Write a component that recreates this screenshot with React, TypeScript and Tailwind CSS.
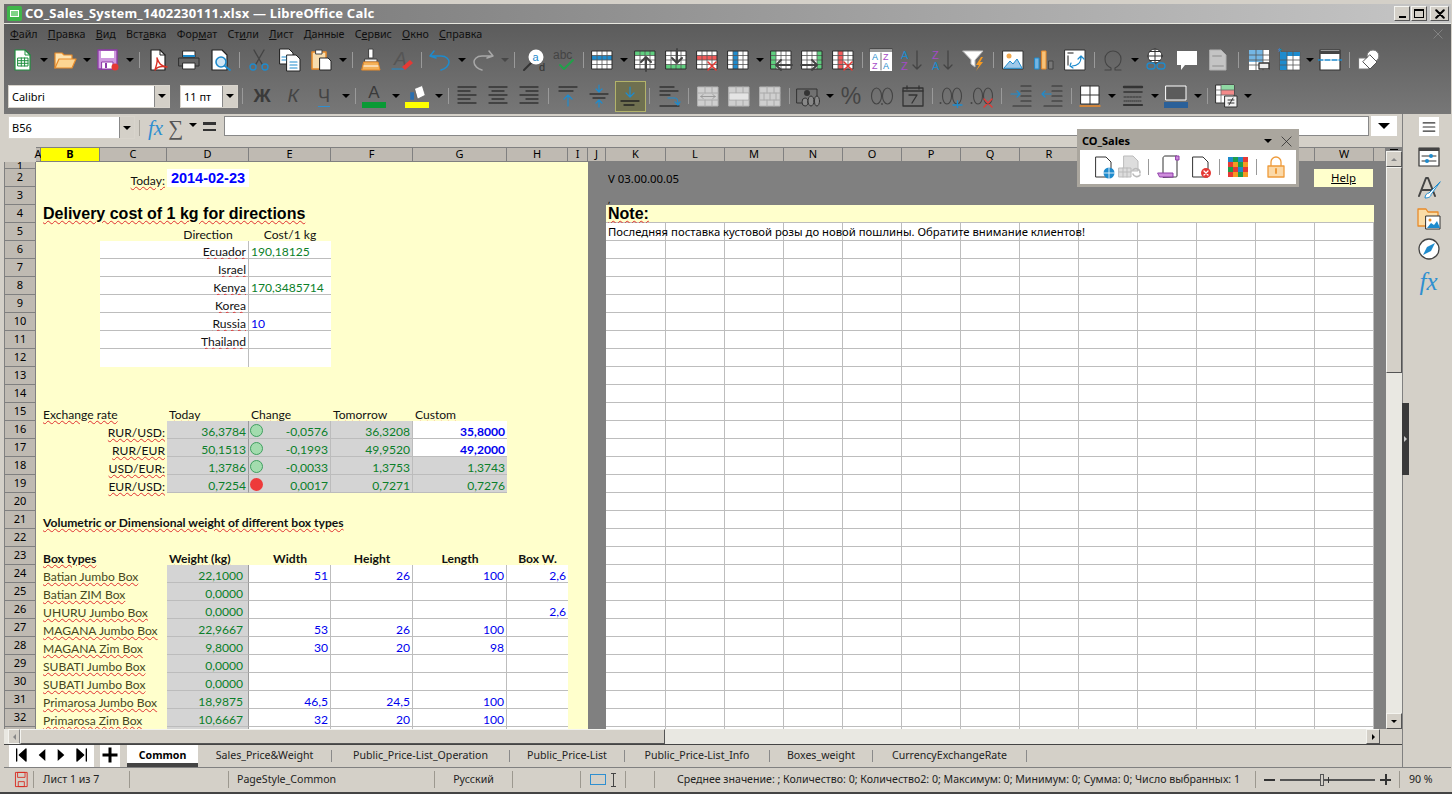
import type { ReactNode } from 'react'

const ui = "font-['Noto_Sans','Liberation_Sans',sans-serif]"
const sheet = "font-['Lato','Open_Sans',sans-serif]"
const arial = "font-['Liberation_Sans',Arial,sans-serif]"
const serif = "font-['Liberation_Serif',serif]"

const ink = '#2e2e2e'
const blue = '#1e8bcd'

function Sv({ children, s = 24 }: { children: ReactNode; s?: number }) {
  return (
    <svg width={s} height={s} viewBox="0 0 24 24" fill="none" strokeLinecap="round" strokeLinejoin="round">
      {children}
    </svg>
  )
}

function Caret({ big }: { big?: boolean }) {
  return big ? (
    <span className="h-0 w-0 border-x-[6px] border-t-[6px] border-x-transparent border-t-black" />
  ) : (
    <span className="h-0 w-0 border-x-[4px] border-t-[4px] border-x-transparent border-t-black" />
  )
}

function Btn({ children }: { children: ReactNode }) {
  return <div className="flex h-full w-[31px] shrink-0 items-center justify-center">{children}</div>
}

function Drop({ children, dim }: { children: ReactNode; dim?: boolean }) {
  return (
    <div className="flex h-full w-[43px] shrink-0 items-center">
      <div className="flex w-[31px] items-center justify-center">{children}</div>
      <div className={dim ? 'flex w-[12px] justify-center opacity-30' : 'flex w-[12px] justify-center'}>
        <Caret />
      </div>
    </div>
  )
}

function Sep({ w = 'w-[7px]' }: { w?: string }) {
  return (
    <div className={`flex h-full shrink-0 items-center justify-center ${w}`}>
      <span className="h-[16px] w-px bg-[#9a9a9a]" />
    </div>
  )
}

/* table icon used by the row / column buttons */
function GridIcon({
  fill,
  rect,
  over,
}: {
  fill?: string
  rect?: [number, number, number, number]
  over?: ReactNode
}) {
  return (
    <Sv>
      <rect x="2" y="3" width="20" height="18" fill="#fff" />
      {rect && fill && <rect x={rect[0]} y={rect[1]} width={rect[2]} height={rect[3]} fill={fill} />}
      <path d="M7 3v18M12 3v18M17 3v18M2 7.5h20M2 12h20M2 16.5h20" stroke="#555" strokeWidth=".8" />
      <rect x="2" y="3" width="20" height="18" stroke={ink} strokeWidth="1" />
      {over}
    </Sv>
  )
}

const arrowUp = <path d="M13 23V9M8 14l5-5 5 5" stroke="#444" strokeWidth="2" />
const arrowDown = <path d="M13 1v14M8 10l5 5 5-5" stroke="#444" strokeWidth="2" />
const arrowLeft = <path d="M23 17H7M12 12l-5 5 5 5" stroke="#444" strokeWidth="2" />
const arrowRight = <path d="M1 17h16M12 12l5 5-5 5" stroke="#444" strokeWidth="2" />
const redX = <path d="M13 14l8 8M21 14l-8 8" stroke="#e53935" strokeWidth="1.6" />

function Lines({ rows }: { rows: [number, number][] }) {
  return (
    <Sv>
      {rows.map(([x, w], i) => (
        <path key={i} d={`M${x} ${3 + i * 4}h${w}`} stroke="#333" strokeWidth="1.3" />
      ))}
    </Sv>
  )
}

function Toolbar1() {
  return (
    <div className="flex h-[34px] pb-[3px] pl-[2.5px]">
      <Drop>
        <Sv>
          <path d="M5 2h10l5 5v15H5z" fill="#fff" stroke="#1f8f3f" strokeWidth="1.2" />
          <path d="M15 2v5h5" stroke="#1f8f3f" />
          <path d="M8 10h10v8H8zM8 12.7h10M8 15.3h10M11.3 10v8M14.6 10v8" stroke="#1f8f3f" strokeWidth="1" />
        </Sv>
      </Drop>
      <Drop>
        <Sv>
          <path d="M2 20V5h7l2 2h8v4" fill="#fde3b0" stroke="#e88b2a" strokeWidth="1.2" />
          <path d="M2 20l4-9h17l-4 9z" fill="#fcd592" stroke="#e88b2a" strokeWidth="1.2" />
        </Sv>
      </Drop>
      <Drop>
        <Sv>
          <path d="M2 2h19v19H2z" fill="#cf9ae0" stroke="#8e3aa8" strokeWidth="1.3" />
          <path d="M5 3h13v7H5z" fill="#fff" />
          <path d="M6 14h11v7H6z" fill="#fff" stroke="#8e3aa8" />
          <path d="M9 15h2v5H9z" fill="#8e3aa8" />
          <circle cx="19" cy="19" r="3.5" fill="#e53935" />
        </Sv>
      </Drop>
      <Sep />
      <Btn>
        <Sv>
          <path d="M5 2h9l5 5v15H5z" fill="#fff" stroke="#222" strokeWidth="1.2" />
          <path d="M14 2v5h5" stroke="#222" />
          <path d="M11 10c2 6 4 8 10 9-5-1-10 0-12 3 1-4 3-8 2-12z" stroke="#d93025" strokeWidth="1.4" />
        </Sv>
      </Btn>
      <Btn>
        <Sv>
          <path d="M6 3h12v6H6z" fill="#fff" stroke={ink} />
          <path d="M6 7h12v2H6z" fill={blue} />
          <path d="M2 10h20v8H2z" fill="#666" stroke={ink} />
          <path d="M6 15h12v6H6z" fill="#fff" stroke={ink} />
        </Sv>
      </Btn>
      <Btn>
        <Sv>
          <path d="M4 2h10l5 5v15H4z" fill="#fff" stroke="#222" strokeWidth="1.2" />
          <circle cx="13" cy="14" r="5" fill="#cfe6f5" stroke={blue} strokeWidth="1.6" />
          <path d="M17 18l5 4" stroke={blue} strokeWidth="2" />
        </Sv>
      </Btn>
      <Sep w="w-[8px]" />
      <Btn>
        <Sv>
          <path d="M7 2l8 14M17 2L9 16" stroke="#444" strokeWidth="1.4" />
          <circle cx="6" cy="19" r="3" stroke={blue} strokeWidth="1.4" />
          <circle cx="18" cy="19" r="3" stroke={blue} strokeWidth="1.4" />
        </Sv>
      </Btn>
      <Btn>
        <Sv>
          <path d="M2 1h9l4 4v11H2z" fill="#fff" stroke="#222" />
          <path d="M9 7h9l4 4v12H9z" fill="#fff" stroke="#222" />
          <path d="M4 9h4M4 12h4M12 14h7M12 17h7M12 20h7" stroke={blue} strokeWidth="1.2" />
        </Sv>
      </Btn>
      <Drop>
        <Sv>
          <path d="M3 4h14v17H3z" fill="#f7dcae" stroke="#e88b2a" strokeWidth="1.5" />
          <path d="M7 2h6v4H7z" fill="#fff" stroke="#444" />
          <path d="M11 10h8l3 3v9H11z" fill="#fff" stroke="#222" />
        </Sv>
      </Drop>
      <Sep />
      <Btn>
        <Sv>
          <path d="M10 1h4v9h-4z" fill="#fff" stroke="#444" />
          <path d="M6 11h12v3H6z" fill="#eee" stroke="#444" />
          <path d="M5 14h14l2 8H3z" fill="#f4b25a" stroke="#e88b2a" />
          <path d="M5 18h14" stroke="#fff" />
        </Sv>
      </Btn>
      <Btn>
        <Sv>
          <text x="4" y="17" fontSize="19" fontStyle="italic" fill="#555" className={arial}>A</text>
          <path d="M2 21h12" stroke={blue} />
          <path d="M12 19l8-7 3 3-8 7z" fill="#e53935" />
        </Sv>
      </Btn>
      <Sep />
      <Drop>
        <Sv>
          <path d="M6 3L2 8l6 2M3 8h10c6 0 8 4 8 6 0 4-4 7-8 8" stroke={blue} strokeWidth="1.5" />
        </Sv>
      </Drop>
      <Drop dim>
        <Sv>
          <path d="M18 3l4 5-6 2M21 8H11C5 8 3 12 3 14c0 4 4 7 8 8" stroke="#a8a8a8" strokeWidth="1.5" />
        </Sv>
      </Drop>
      <Sep w="w-[8px]" />
      <Btn>
        <Sv>
          <path d="M2 22l7-7" stroke="#333" strokeWidth="2" />
          <circle cx="14" cy="9" r="7.5" fill="#fff" />
          <text x="10.5" y="13" fontSize="11" fill={blue} className={arial}>a</text>
          <text x="17" y="23" fontSize="11" fill="#333" className={arial}>d</text>
        </Sv>
      </Btn>
      <Btn>
        <Sv>
          <text x="0" y="11" fontSize="12" fill="#444" className={arial}>abc</text>
          <path d="M7 17l4 4 9-9" stroke="#21a04a" strokeWidth="2" />
        </Sv>
      </Btn>
      <Sep w="w-[6px]" />
      <Drop>
        <GridIcon fill={blue} rect={[2, 7.5, 20, 4.5]} />
      </Drop>
      <Btn>
        <GridIcon fill="#5fcf7f" rect={[2, 3, 20, 4.5]} over={arrowUp} />
      </Btn>
      <Btn>
        <GridIcon fill="#5fcf7f" rect={[2, 16.5, 20, 4.5]} over={arrowDown} />
      </Btn>
      <Btn>
        <GridIcon fill="#f35a5a" rect={[2, 7.5, 20, 4.5]} over={redX} />
      </Btn>
      <Drop>
        <GridIcon fill={blue} rect={[7, 3, 5, 18]} />
      </Drop>
      <Btn>
        <GridIcon fill="#5fcf7f" rect={[2, 3, 5, 18]} over={arrowLeft} />
      </Btn>
      <Btn>
        <GridIcon fill="#5fcf7f" rect={[17, 3, 5, 18]} over={arrowRight} />
      </Btn>
      <Btn>
        <GridIcon fill="#f35a5a" rect={[7, 3, 5, 18]} over={redX} />
      </Btn>
      <Sep />
      <Btn>
        <Sv>
          <path d="M1 1h22v22H1z" fill="#fff" />
          <path d="M1 1h22M1 3h22" stroke="#333" strokeWidth="1" />
          <text x="3" y="12" fontSize="9" fill={blue} className={arial}>A</text>
          <text x="3" y="21" fontSize="9" fill="#a64ac9" className={arial}>Z</text>
          <text x="14" y="12" fontSize="9" fill="#a64ac9" className={arial}>Z</text>
          <text x="14" y="21" fontSize="9" fill={blue} className={arial}>A</text>
          <path d="M12 5v17" stroke="#333" strokeWidth=".7" />
        </Sv>
      </Btn>
      <Btn>
        <Sv>
          <text x="1" y="11" fontSize="11" fill={blue} className={arial}>A</text>
          <text x="1" y="22" fontSize="11" fill="#a64ac9" className={arial}>Z</text>
          <path d="M17 3v18M13 17l4 4 4-4" stroke="#444" strokeWidth="1.3" />
        </Sv>
      </Btn>
      <Btn>
        <Sv>
          <text x="1" y="11" fontSize="11" fill="#a64ac9" className={arial}>Z</text>
          <text x="1" y="22" fontSize="11" fill={blue} className={arial}>A</text>
          <path d="M17 3v18M13 17l4 4 4-4" stroke="#444" strokeWidth="1.3" />
        </Sv>
      </Btn>
      <Btn>
        <Sv>
          <path d="M1 3h20l-8 9v7l-4-3v-4z" fill="#fff" stroke="#bbb" />
          <path d="M19 9l-5 8h3l-3 6 7-9h-3l3-5z" fill="#f59a23" />
        </Sv>
      </Btn>
      <Sep w="w-[8px]" />
      <Btn>
        <Sv>
          <path d="M2 3h20v18H2z" fill="#fff" stroke="#333" />
          <circle cx="8" cy="8" r="2.5" fill="#f2a94e" />
          <path d="M3 20l6-7 3 3 4-5 5 9z" fill="#9fc9ea" stroke={blue} />
        </Sv>
      </Btn>
      <Btn>
        <Sv>
          <path d="M3 10h4v11H3z" fill="#74b6e4" stroke={blue} />
          <path d="M10 3h4v18h-4z" fill="#f6c27a" stroke="#e88b2a" />
          <path d="M17 13h4v8h-4z" fill="#777" stroke="#444" />
        </Sv>
      </Btn>
      <Btn>
        <Sv>
          <path d="M2 2h20v20H2z" fill="#fff" stroke="#333" />
          <path d="M5 5h5M5 8v9" stroke="#666" strokeWidth="1.5" />
          <path d="M9 18c5 0 9-3 9-9M15 11l3-3 3 3M8 15l-1 3 3 2" stroke={blue} strokeWidth="1.2" />
        </Sv>
      </Btn>
      <Sep />
      <Drop>
        <Sv>
          <path d="M4 22h6v-2c-4-2-6-5-6-9 0-5 4-8 8-8s8 3 8 8c0 4-2 7-6 9v2h6" stroke="#444" strokeWidth="1.1" />
        </Sv>
      </Drop>
      <Btn>
        <Sv>
          <circle cx="11" cy="8" r="7" fill="#fff" stroke="#333" />
          <path d="M4 8h14M11 1v14M6 3.5h10M6 12.5h10" stroke="#333" strokeWidth="1" />
          <rect x="3" y="15" width="8" height="6" rx="3" stroke={blue} strokeWidth="1.3" />
          <rect x="13" y="15" width="8" height="6" rx="3" stroke={blue} strokeWidth="1.3" />
        </Sv>
      </Btn>
      <Btn>
        <Sv>
          <path d="M2 3h20v14H10l-4 5v-5H2z" fill="#fff" />
        </Sv>
      </Btn>
      <Btn>
        <Sv>
          <path d="M4 2h11l5 5v15H4z" fill="#c4c4c4" stroke="#b0b0b0" />
          <path d="M7 8h8M7 18h10" stroke="#a8a8a8" strokeWidth="2" />
        </Sv>
      </Btn>
      <Sep w="w-[10px]" />
      <Btn>
        <Sv>
          <path d="M2 2h20v20H2z" fill="#fff" />
          <path d="M2 2h14v12H2z" fill="#74b6e4" />
          <path d="M2 7h20M2 12h20M2 17h20M9 2v20M16 2v20" stroke="#555" strokeWidth=".8" />
          <path d="M12 15h10v6H12z" fill="#eee" stroke="#333" strokeWidth="1.3" />
        </Sv>
      </Btn>
      <div className="flex h-full w-[40px] shrink-0 items-center">
        <div className="flex w-[31px] justify-center">
          <Sv>
            <path d="M2 4h20v18H2z" fill="#fff" stroke="#555" strokeWidth=".8" />
            <path d="M2 4h20v4H2zM2 4h7v18H2z" fill={blue} />
            <path d="M2 12h20M2 17h20M9 4v18M15 4v18" stroke="#555" strokeWidth=".8" />
            <text x="0" y="8" fontSize="10" fill={blue} className={arial}>*</text>
          </Sv>
        </div>
        <Caret />
      </div>
      <Btn>
        <Sv>
          <path d="M2 2h20v20H2z" fill="#fff" stroke="#333" strokeWidth="1.2" />
          <path d="M2 3h20v3H2z" fill="#444" />
          <path d="M0 12h24" stroke={blue} strokeWidth="1.4" strokeDasharray="5 2" />
        </Sv>
      </Btn>
      <Sep w="w-[8px]" />
      <Btn>
        <Sv>
          <circle cx="16" cy="8" r="6" fill="#fff" stroke="#777" />
          <path d="M2 10h10v11H2z" fill="#fff" stroke="#777" />
          <path d="M13 7l7 7-7 7-7-7z" fill="#fff" stroke="#555" />
        </Sv>
      </Btn>
    </div>
  )
}

function Combo({ w, label }: { w: string; label: string }) {
  return (
    <div className={`flex h-[23px] shrink-0 border border-[#d8d4cc] bg-white ${w} ${ui}`}>
      <span className="flex-1 truncate pl-[3px] text-[11px] leading-[21px] text-black">{label}</span>
      <span className="flex w-[15px] items-center justify-center border-l border-[#888] bg-[#d4d0c8]">
        <Caret />
      </span>
    </div>
  )
}

function MergeIcon({ children }: { children?: ReactNode }) {
  return (
    <Sv>
      <path d="M2 3h20v19H2z" fill="#cfcfcf" stroke="#b5b5b5" />
      <path d="M2 9h20M2 16h20M9 3v6M16 3v6M9 16v6M16 16v6" stroke="#aaa" />
      {children}
    </Sv>
  )
}

function Toolbar2() {
  return (
    <div className="flex h-[36px] items-center pl-[4px]">
      <Combo w="w-[162px]" label="Calibri" />
      <div className="w-[10px] shrink-0" />
      <Combo w="w-[58px]" label="11 пт" />
      <Sep w="w-[8.5px]" />
      <Btn>
        <span className={`text-[19px] font-bold text-[#3a3a3a] ${arial}`}>Ж</span>
      </Btn>
      <Btn>
        <span className={`text-[19px] italic text-[#444] ${arial}`}>К</span>
      </Btn>
      <Drop>
        <span className={`border-b border-[#2f8fd0] text-[18px] leading-[20px] text-[#444] ${arial}`}>Ч</span>
      </Drop>
      <Sep />
      <Drop>
        <div className="flex flex-col items-center">
          <span className={`text-[17px] leading-[17px] text-[#3a3a3a] ${arial}`}>A</span>
          <span className="mt-[1px] h-[6px] w-[24px] bg-[#0a9a35]" />
        </div>
      </Drop>
      <Drop>
        <div className="flex flex-col items-center">
          <Sv s={18}>
            <path d="M3 21V11h5v10z" fill="#2a6fb0" />
            <path d="M9 6l10-4 4 13-10 5z" fill="#fff" stroke="#666" />
          </Sv>
          <span className="h-[6px] w-[24px] bg-[#ffff00]" />
        </div>
      </Drop>
      <Sep />
      <Btn>
        <Lines rows={[[3, 18], [3, 12], [3, 18], [3, 12], [3, 18]]} />
      </Btn>
      <Btn>
        <Lines rows={[[3, 18], [6, 12], [3, 18], [6, 12], [3, 18]]} />
      </Btn>
      <Btn>
        <Lines rows={[[3, 18], [9, 12], [3, 18], [9, 12], [3, 18]]} />
      </Btn>
      <Sep w="w-[8px]" />
      <Btn>
        <Sv>
          <path d="M3 3h18M3 7h14" stroke="#333" strokeWidth="1.3" />
          <path d="M12 22V12M8 15l4-4 4 4" stroke={blue} strokeWidth="1.2" />
        </Sv>
      </Btn>
      <Btn>
        <Sv>
          <path d="M3 10h18M6 14h12" stroke="#333" strokeWidth="1.3" />
          <path d="M12 1v7M9 5l3 3 3-3M12 23v-7M9 19l3-3 3 3" stroke={blue} strokeWidth="1.2" />
        </Sv>
      </Btn>
      <div className="flex h-[31px] w-[31px] shrink-0 items-center justify-center border border-[#b3b36a] bg-[#6f7050]">
        <Sv>
          <path d="M3 17h18M6 21h10" stroke="#222" strokeWidth="1.3" />
          <path d="M12 3v9M8 9l4 4 4-4" stroke={blue} strokeWidth="1.2" />
        </Sv>
      </div>
      <Sep w="w-[8px]" />
      <Btn>
        <Sv>
          <path d="M3 3h14M3 7h18M3 11h10M3 22h19" stroke="#333" strokeWidth="1.3" />
          <path d="M11 14h7c3 0 3 3 3 6M18 18l3 3 2-3" stroke={blue} strokeWidth="1.2" />
        </Sv>
      </Btn>
      <Sep w="w-[8px]" />
      <Btn>
        <MergeIcon>
          <path d="M5 12.5h14M5 12.5l2-2M5 12.5l2 2M19 12.5l-2-2M19 12.5l-2 2" stroke="#9a9a9a" />
        </MergeIcon>
      </Btn>
      <Btn>
        <MergeIcon>
          <path d="M3 9.5h18v6H3z" fill="#e4e4e4" stroke="none" />
        </MergeIcon>
      </Btn>
      <Btn>
        <MergeIcon>
          <path d="M6 9v7M12 9v7M18 9v7" stroke="#aaa" />
        </MergeIcon>
      </Btn>
      <Sep />
      <Drop>
        <Sv>
          <path d="M1 5h20v14H1z" stroke="#333" />
          <circle cx="11" cy="9" r="3" fill="#333" />
          <ellipse cx="9" cy="18" rx="3" ry="4" fill="#888" stroke="#333" />
          <ellipse cx="15" cy="17" rx="3" ry="5" fill="#888" stroke="#333" />
          <ellipse cx="21" cy="17" rx="2.5" ry="5" fill="#888" stroke="#333" />
        </Sv>
      </Drop>
      <Btn>
        <span className={`text-[23px] leading-none text-[#444] ${arial}`}>%</span>
      </Btn>
      <Btn>
        <Sv>
          <ellipse cx="6.5" cy="12" rx="5" ry="8" stroke="#444" strokeWidth="1.1" />
          <ellipse cx="17.5" cy="12" rx="5" ry="8" stroke="#444" strokeWidth="1.1" />
          <circle cx="12" cy="20" r=".9" fill="#444" />
        </Sv>
      </Btn>
      <Btn>
        <Sv>
          <path d="M2 4h20v18H2z" stroke="#333" strokeWidth="1.3" />
          <path d="M2 7h20M6 2v3M18 2v3" stroke="#333" strokeWidth="1.3" />
          <path d="M8 11h8l-5 8" stroke="#333" strokeWidth="1.3" />
        </Sv>
      </Btn>
      <Sep />
      <Btn>
        <Sv>
          <circle cx="1.5" cy="19" r="1" fill="#444" />
          <ellipse cx="8" cy="12" rx="4.5" ry="8" stroke="#444" strokeWidth="1.1" />
          <ellipse cx="18" cy="12" rx="4.5" ry="8" stroke="#444" strokeWidth="1.1" />
          <path d="M14 21h9M18.5 17v8" stroke={blue} strokeWidth="1.3" />
        </Sv>
      </Btn>
      <Btn>
        <Sv>
          <circle cx="1.5" cy="19" r="1" fill="#444" />
          <ellipse cx="8" cy="12" rx="4.5" ry="8" stroke="#444" strokeWidth="1.1" />
          <ellipse cx="18" cy="12" rx="4.5" ry="8" stroke="#444" strokeWidth="1.1" />
          <path d="M14 15l8 8M22 15l-8 8" stroke="#e53935" strokeWidth="1.4" />
        </Sv>
      </Btn>
      <Sep w="w-[8px]" />
      <Btn>
        <Sv>
          <path d="M12 2h10M12 7h10M12 12h10M12 17h10M4 22h18" stroke="#333" strokeWidth="1.2" />
          <path d="M2 10h9M8 7l3 3-3 3" stroke={blue} strokeWidth="1.2" />
        </Sv>
      </Btn>
      <Btn>
        <Sv>
          <path d="M12 2h10M12 7h10M12 12h10M12 17h10M4 22h18" stroke="#333" strokeWidth="1.2" />
          <path d="M11 10H2M5 7l-3 3 3 3" stroke={blue} strokeWidth="1.2" />
        </Sv>
      </Btn>
      <Sep />
      <Drop>
        <Sv>
          <path d="M3 2h18v18H3z" fill="#fff" stroke="#333" />
          <path d="M12 2v18M3 11h18" stroke="#333" />
          <path d="M2 22h20" stroke="#ee8a2a" strokeWidth="1.4" />
        </Sv>
      </Drop>
      <Drop>
        <Sv>
          <path d="M3 3h18" stroke="#333" strokeWidth="2.4" />
          <path d="M3 8h18" stroke="#333" strokeWidth="1.6" />
          <path d="M3 13h18" stroke="#333" strokeDasharray="2 1" />
          <path d="M3 17h18" stroke="#333" strokeDasharray="1 1" />
          <path d="M3 21h18" stroke="#333" strokeWidth="2.2" />
        </Sv>
      </Drop>
      <Drop>
        <Sv>
          <path d="M2 2h20v14H2z" fill="#5c5c5c" stroke="#fff" strokeWidth="1" />
          <path d="M0 18h24v6H0z" fill="#2a6099" />
        </Sv>
      </Drop>
      <Sep />
      <Drop>
        <Sv>
          <path d="M2 1h18v18H2z" fill="#fff" stroke="#333" />
          <path d="M7 1h13v5H7z" fill="#8fd9a3" />
          <path d="M7 6h13v5H7z" fill="#f38a8a" />
          <path d="M2 6h18M2 11h18M7 1v18" stroke="#666" strokeWidth=".8" />
          <path d="M11 12h12v11H11z" fill="#f2f2f2" stroke="#333" />
          <path d="M14 16h6M14 19h6M19 14l-4 7" stroke="#333" />
        </Sv>
      </Drop>
    </div>
  )
}

const menus: [string, string, string][] = [
  ['', 'Ф', 'айл'],
  ['', 'П', 'равка'],
  ['', 'В', 'ид'],
  ['Вст', 'а', 'вка'],
  ['Фор', 'м', 'ат'],
  ['Ст', 'и', 'ли'],
  ['', 'Л', 'ист'],
  ['', 'Д', 'анные'],
  ['С', 'е', 'рвис'],
  ['', 'О', 'кно'],
  ['', 'С', 'правка'],
]

function TitleBar() {
  return (
    <div className="flex h-[20px] items-center border-b border-[#e8e8e0] bg-gradient-to-r from-[#6c6c6c] to-[#c6c6c6] pl-[3px] pr-[2px]">
      <div className="flex h-[15px] w-[15px] items-center justify-center rounded-[2px] bg-[#3fb64a]">
        <span className="h-[7px] w-[9px] border border-white bg-[#7fd487]" />
      </div>
      <span className={`ml-[3px] flex-1 text-[13px] font-bold tracking-[0.2px] text-white ${ui}`}>
        CO_Sales_System_1402230111.xlsx — LibreOffice Calc
      </span>
      <div className="flex gap-px">
        {[0, 1].map((i) => (
          <span
            key={i}
            className="flex h-[15px] w-[16px] items-center justify-center border border-[#f4f4f0] border-r-[#555] border-b-[#555] bg-[#d4d0c8]"
          >
            {i === 0 ? (
              <span className="mt-[7px] h-[2px] w-[7px] bg-black" />
            ) : (
              <span className="h-[9px] w-[10px] border border-t-2 border-black" />
            )}
          </span>
        ))}
        <span className="ml-[2px] flex h-[15px] w-[19px] items-center justify-center border border-[#f4f4f0] border-r-[#555] border-b-[#555] bg-[#d4d0c8]">
          <Sv s={10}>
            <path d="M3 3l18 18M21 3L3 21" stroke="#000" strokeWidth="5" />
          </Sv>
        </span>
      </div>
    </div>
  )
}

function MenuBar() {
  return (
    <div className={`flex h-[20px] items-center gap-[10.2px] pl-[6px] pr-[8px] text-[10.7px] text-[#101010] ${ui}`}>
      {menus.map(([a, u, b]) => (
        <span key={a + u + b}>
          {a}
          <u>{u}</u>
          {b}
        </span>
      ))}
      <span className="ml-auto">
        <Sv s={10}>
          <path d="M2 2l20 20M22 2L2 22" stroke="#8a8a8a" strokeWidth="2" />
        </Sv>
      </span>
    </div>
  )
}

function FormulaBar() {
  return (
    <div className="flex h-[33px] items-start pt-[2px]">
      <div className="flex w-[4px] shrink-0" />
      <Combo w="w-[127px]" label="B56" />
      <div className="ml-[4px] mt-[4px] h-[16px] w-px bg-[#a8a49c]" />
      <span className={`ml-[8px] text-[21px] italic leading-[24px] text-[#2f8fd0] ${serif}`}>fx</span>
      <span className={`ml-[5px] text-[21px] leading-[24px] text-[#555] ${serif}`}>∑</span>
      <span className="ml-[6px] mt-[10px]">
        <Caret />
      </span>
      <span className="ml-[6px] mt-[6px] flex h-[9px] w-[13px] flex-col justify-between">
        <span className="h-[2.5px] bg-[#333]" />
        <span className="h-[2.5px] bg-[#333]" />
      </span>
      <div className="ml-[8px] h-[20px] w-[1145px] border border-[#888] bg-white" />
      <div className="ml-[2px] flex h-[20px] w-[26px] items-center justify-center bg-white">
        <Caret big />
      </div>
    </div>
  )
}

type Cell = { c: number; t?: string; cls?: string; wave?: boolean; dot?: 'g' | 'r' }

const white = 'bg-white border-b border-[#bdbdbd]'
const grey = 'bg-[#d4d4d4] border-b border-[#bcbcbc]'
const right = 'justify-end'
const center = 'justify-center'
const green = 'text-[#0b7f2a]'
const bluev = 'text-[#0000ee]'

const dirRows: [number, string, string, string][] = [
  [6, 'Ecuador', '190,18125', green],
  [7, 'Israel', '', ''],
  [8, 'Kenya', '170,3485714', green],
  [9, 'Korea', '', ''],
  [10, 'Russia', '10', bluev],
  [11, 'Thailand', '', ''],
]

const rateRows: [number, string, string, 'g' | 'r', string, string, string, boolean][] = [
  [16, 'RUR/USD:', '36,3784', 'g', '-0,0576', '36,3208', '35,8000', true],
  [17, 'RUR/EUR', '50,1513', 'g', '-0,1993', '49,9520', '49,2000', true],
  [18, 'USD/EUR:', '1,3786', 'g', '-0,0033', '1,3753', '1,3743', false],
  [19, 'EUR/USD:', '0,7254', 'r', '0,0017', '0,7271', '0,7276', false],
]

const boxRows: [number, string, string, string, string, string, string][] = [
  [24, 'Batian Jumbo Box', '22,1000', '51', '26', '100', '2,6'],
  [25, 'Batian ZIM Box', '0,0000', '', '', '', ''],
  [26, 'UHURU Jumbo Box', '0,0000', '', '', '', '2,6'],
  [27, 'MAGANA Jumbo Box', '22,9667', '53', '26', '100', ''],
  [28, 'MAGANA Zim Box', '9,8000', '30', '20', '98', ''],
  [29, 'SUBATI Jumbo Box', '0,0000', '', '', '', ''],
  [30, 'SUBATI Jumbo Box', '0,0000', '', '', '', ''],
  [31, 'Primarosa Jumbo Box', '18,9875', '46,5', '24,5', '100', ''],
  [32, 'Primarosa Zim Box', '10,6667', '32', '20', '100', ''],
  [33, '', '', '', '', '', ''],
]

function leftCells(r: number): Cell[] {
  if (r === 2)
    return [
      { c: 2, t: 'Today:', cls: right, wave: true },
      {
        c: 3,
        t: '2014-02-23',
        cls: `bg-white justify-center font-bold text-[#0000ff] text-[14.5px] pt-[0px]! ${arial}`,
      },
    ]
  if (r === 4)
    return [
      {
        c: 1,
        t: 'Delivery cost of 1 kg for directions',
        cls: `font-bold text-[16px] text-black pt-[0px]! ${arial}`,
        wave: true,
      },
    ]
  if (r === 5)
    return [
      { c: 3, t: 'Direction', cls: center },
      { c: 4, t: 'Cost/1 kg', cls: center },
    ]
  const d = dirRows.find((x) => x[0] === r)
  if (d)
    return [
      { c: 2, cls: white },
      { c: 3, t: d[1], cls: `${white} ${right} border-r border-r-[#bdbdbd]`, wave: true },
      { c: 4, t: d[2], cls: `${white} ${d[3]}` },
    ]
  if (r === 12)
    return [
      { c: 2, cls: 'bg-white' },
      { c: 3, cls: 'bg-white border-r border-[#bdbdbd]' },
      { c: 4, cls: 'bg-white' },
    ]
  if (r === 15)
    return [
      { c: 1, t: 'Exchange rate', wave: true },
      { c: 3, t: 'Today', wave: true },
      { c: 4, t: 'Change', wave: true },
      { c: 5, t: 'Tomorrow', wave: true },
      { c: 6, t: 'Custom', wave: true },
    ]
  const e = rateRows.find((x) => x[0] === r)
  if (e)
    return [
      { c: 2, t: e[1], cls: right, wave: true },
      { c: 3, t: e[2], cls: `${grey} ${right} ${green} border-r border-r-[#9a9a9a]` },
      { c: 4, t: e[4], dot: e[3], cls: `${grey} ${right} ${green} border-r border-r-[#bcbcbc]` },
      { c: 5, t: e[5], cls: `${grey} ${right} ${green} border-r border-r-[#bcbcbc]` },
      {
        c: 6,
        t: e[6],
        cls: e[7] ? `${white} ${right} font-bold ${bluev}` : `${grey} ${right} ${green}`,
      },
    ]
  if (r === 21)
    return [{ c: 1, t: 'Volumetric or Dimensional weight of different box types', cls: 'font-bold', wave: true }]
  if (r === 23)
    return [
      { c: 1, t: 'Box types', cls: 'font-bold', wave: true },
      { c: 3, t: 'Weight (kg)', cls: 'font-bold', wave: true },
      { c: 4, t: 'Width', cls: `font-bold ${center}`, wave: true },
      { c: 5, t: 'Height', cls: `font-bold ${center}`, wave: true },
      { c: 6, t: 'Length', cls: `font-bold ${center}`, wave: true },
      { c: 7, t: 'Box W.', cls: `font-bold ${center}`, wave: true },
    ]
  const b = boxRows.find((x) => x[0] === r)
  if (b) {
    const line = `${white} ${right} ${bluev} border-r border-r-[#bdbdbd]`
    return [
      { c: 1, t: b[1], cls: 'text-[#47471c]', wave: !!b[1] },
      { c: 3, t: b[2], cls: `${grey} ${right} ${green} pr-[5px] border-r border-r-[#9a9a9a]` },
      { c: 4, t: b[3], cls: line },
      { c: 5, t: b[4], cls: line },
      { c: 6, t: b[5], cls: line },
      { c: 7, t: b[6], cls: `${white} ${right} ${bluev}` },
    ]
  }
  return []
}

function LeftPane({ r }: { r: number }) {
  const cells = leftCells(r)
  return (
    <div
      className={`grid h-full w-[552px] shrink-0 grid-cols-[5px_59px_67px_82px_82px_82px_94px_61px_20px] grid-rows-[18px] bg-[#ffffcc] text-[12.1px] text-[#111] ${sheet}`}
    >
      {Array.from({ length: 9 }, (_, i) => {
        const cell = cells.find((x) => x.c === i)
        return (
          <div
            key={i}
            className={`relative flex items-center whitespace-nowrap px-[2px] pt-[5px] leading-[12px] ${cell?.cls ?? ''}`}
          >
            {cell?.dot && (
              <span
                className={
                  cell.dot === 'g'
                    ? 'absolute left-[1px] top-[3px] h-[13px] w-[13px] rounded-full border border-[#3f9f60] bg-[#a3dcae]'
                    : 'absolute left-[1px] top-[3px] h-[13px] w-[13px] rounded-full bg-[#ee3b3b]'
                }
              />
            )}
            {cell?.t && (
              <span
                className={
                  cell.wave
                    ? 'shrink-0 underline decoration-[#e03030] decoration-wavy decoration-1 underline-offset-1'
                    : 'shrink-0'
                }
              >
                {cell.t}
              </span>
            )}
          </div>
        )
      })}
    </div>
  )
}

function RightPane({ r }: { r: number }) {
  if (r <= 3)
    return (
      <div className={`flex h-full w-[768px] shrink-0 bg-[#808080] text-[11.4px] text-black ${ui}`}>
        {r === 2 && <span className="pl-[2px] pt-[1px]">V 03.00.00.05</span>}
        {r === 2 && (
          <span className="ml-auto mr-[1px] flex w-[59px] items-center justify-center bg-[#ffffcc] underline">Help</span>
        )}
        {r === 3 && <span className="pl-[2px] pt-[6px] text-[9px]">,</span>}
      </div>
    )
  if (r === 4)
    return (
      <div className={`flex h-full w-[768px] shrink-0 items-center border-b border-[#bdbdbd] bg-[#ffffcc] pl-[2px] text-[16px] font-bold text-black ${arial}`}>
        <span className="underline decoration-[#e03030] decoration-wavy decoration-1 underline-offset-1">Note:</span>
      </div>
    )
  return (
    <div className="relative grid h-full w-[768px] shrink-0 grid-cols-[60px_repeat(12,59px)] bg-white">
      {Array.from({ length: 13 }, (_, i) => (
        <div key={i} className="border-b border-r border-[#bdbdbd]" />
      ))}
      {r === 5 && (
        <span className={`absolute left-[2px] top-[1px] whitespace-nowrap text-[11.3px] text-black ${ui}`}>
          Последняя поставка кустовой розы до новой пошлины. Обратите внимание клиентов!
        </span>
      )}
    </div>
  )
}

function SheetRow({ r }: { r: number }) {
  return (
    <div className={r === 1 ? 'flex h-[7px] overflow-hidden' : 'flex h-[18px] shrink-0'}>
      <div
        className={`flex w-[32px] shrink-0 items-center justify-center border-x border-b border-[#808080] bg-[#bfbab2] text-[11px] text-black ${ui} ${
          r === 1 ? 'leading-[7px]' : ''
        }`}
      >
        {r === 33 ? '' : r}
      </div>
      <LeftPane r={r} />
      <div className="w-[18px] shrink-0 bg-[#808080]" />
      <RightPane r={r} />
      <div className="w-[12px] shrink-0 bg-[#808080]" />
    </div>
  )
}

const colHeads: [string, string][] = [
  ['A', 'w-[5px]'],
  ['B', 'w-[59px]'],
  ['C', 'w-[67px]'],
  ['D', 'w-[82px]'],
  ['E', 'w-[82px]'],
  ['F', 'w-[82px]'],
  ['G', 'w-[94px]'],
  ['H', 'w-[61px]'],
  ['I', 'w-[20px]'],
  ['J', 'w-[18px]'],
  ['K', 'w-[60px]'],
  ...'LMNOPQRSTUVW'.split('').map((x): [string, string] => [x, 'w-[59px]']),
  ['', 'w-[12px]'],
]

function ColHeader() {
  return (
    <div className={`flex h-[15px] text-[11px] text-black ${ui}`}>
      <div className="w-[32px] shrink-0" />
      {colHeads.map(([n, w]) => (
        <div
          key={n + w}
          className={`flex shrink-0 items-center justify-center overflow-visible border-y border-r border-[#808080] ${w} ${
            n === 'B' ? 'bg-[#ffff00] font-bold' : 'bg-[#bfbab2]'
          }`}
        >
          {n}
        </div>
      ))}
    </div>
  )
}

function VScroll() {
  return (
    <div className="flex w-[16px] shrink-0 flex-col bg-[#e9e8e2]">
      <div className="flex h-[4px] items-center justify-center bg-[#808080]">
        <span className="h-px w-[8px] bg-black" />
      </div>
      <div className="flex h-[16px] items-center justify-center border border-[#f4f4f0] border-r-[#555] border-b-[#555] bg-[#d4d0c8]">
        <span className="h-0 w-0 border-x-[3px] border-b-[3px] border-x-transparent border-b-[#888]" />
      </div>
      <div className="h-[206px] border border-[#f4f4f0] border-r-[#555] border-b-[#555] bg-[#d4d0c8]" />
      <div className="flex-1" />
      <div className="flex h-[16px] items-center justify-center border border-[#f4f4f0] border-r-[#555] border-b-[#555] bg-[#d4d0c8]">
        <span className="h-0 w-0 border-x-[3px] border-t-[3px] border-x-transparent border-t-black" />
      </div>
    </div>
  )
}

function HScroll() {
  return (
    <div className="flex h-[16px] items-stretch border-b border-[#444] bg-[#e9e8e2] pl-[4px]">
      <div className="flex w-[12px] items-center justify-center border border-[#f4f4f0] border-r-[#888] bg-[#d4d0c8]">
        <span className="h-0 w-0 border-y-[3px] border-r-[3px] border-y-transparent border-r-[#888]" />
      </div>
      <div className="w-[645px] border border-[#f4f4f0] border-r-[#555] border-b-[#555] bg-[#d4d0c8]" />
      <div className="flex-1" />
      <div className="flex w-[14px] items-center justify-center border border-[#f4f4f0] border-r-[#555] border-b-[#555] bg-[#d4d0c8]">
        <span className="h-0 w-0 border-y-[3px] border-l-[3px] border-y-transparent border-l-black" />
      </div>
      <div className="w-[22px] bg-[#d4d0c8]" />
    </div>
  )
}

const tabs: [string, string][] = [
  ['Sales_Price&Weight', 'w-[134px]'],
  ['Public_Price-List_Operation', 'w-[178px]'],
  ['Public_Price-List', 'w-[115px]'],
  ['Public_Price-List_Info', 'w-[145px]'],
  ['Boxes_weight', 'w-[103px]'],
  ['CurrencyExchangeRate', 'w-[154px]'],
]

function TabBar() {
  return (
    <div className={`flex h-[22px] items-stretch pl-[5px] text-[10.6px] text-[#222] ${ui}`}>
      <div className="flex w-[85px] items-center justify-around bg-white px-[3px] pb-[3px]">
        <Sv s={16}><path d="M4 3v18M18 3L8 12l10 9z" fill="#000" stroke="#000" strokeWidth="2" /></Sv>
        <Sv s={16}><path d="M17 3L7 12l10 9z" fill="#000" /></Sv>
        <Sv s={16}><path d="M7 3l10 9-10 9z" fill="#000" /></Sv>
        <Sv s={16}><path d="M20 3v18M6 3l10 9-10 9z" fill="#000" stroke="#000" strokeWidth="2" /></Sv>
      </div>
      <div className="ml-[6px] flex w-[20px] items-center justify-center bg-white pb-[3px]">
        <Sv s={18}><path d="M12 2v20M2 12h20" stroke="#000" strokeWidth="4" strokeLinecap="butt" /></Sv>
      </div>
      <div className="ml-[7px] flex w-[71px] items-center justify-center border-b-[4px] border-[#444] bg-white pt-[3px] font-bold text-black">
        Common
      </div>
      {tabs.map(([t, w]) => (
        <div key={t} className={`flex shrink-0 items-center justify-center ${w}`}>
          <span className="flex-1 text-center">{t}</span>
          <span className="h-[12px] w-px bg-[#8a8a8a]" />
        </div>
      ))}
    </div>
  )
}

function Sidebar() {
  return (
    <div className="flex w-[49px] shrink-0 flex-col items-center border-l border-[#808080] pl-[3px] pt-[3px]">
      <div className="flex h-[19px] w-[20px] items-center justify-center bg-white">
        <Sv s={14}>
          <path d="M2 5h20M2 12h20M2 19h20" stroke="#333" strokeWidth="2" />
        </Sv>
      </div>
      <div className="mt-[6px] flex h-[30px] items-center">
        <Sv>
          <path d="M2 3h20v18H2z" fill="#fff" stroke="#333" strokeWidth="1.2" />
          <path d="M2 3h20v3H2z" fill="#444" />
          <path d="M5 11h14M5 16h14" stroke="#333" />
          <circle cx="14" cy="11" r="2" fill={blue} />
          <circle cx="10" cy="16" r="2" fill={blue} />
        </Sv>
      </div>
      <div className="flex h-[31px] items-center">
        <Sv>
          <path d="M2 20L9 2h2l7 18M5 14h11" stroke="#444" strokeWidth="2" />
          <path d="M23 6L12 17c-2 0-4 2-4 5 3 0 6-1 6-3z" fill="#fff" stroke={blue} />
        </Sv>
      </div>
      <div className="flex h-[30px] items-center">
        <Sv>
          <path d="M1 20V3h8l2 3h10v14z" fill="#fbdca6" stroke="#e88b2a" strokeWidth="1.3" />
          <path d="M9 10h14v13H9z" fill="#fff" stroke="#333" />
          <circle cx="13" cy="14" r="1.5" fill="#e88b2a" />
          <path d="M10 22l4-5 3 2 3-4 3 7z" fill={blue} />
        </Sv>
      </div>
      <div className="flex h-[32px] items-center">
        <Sv>
          <circle cx="12" cy="12" r="10" fill="#fff" stroke="#444" strokeWidth="1.3" />
          <path d="M18 6l-4 8-8 4 4-8z" fill={blue} />
        </Sv>
      </div>
      <span className={`mt-[2px] text-[25px] italic leading-[30px] text-[#2f8fd0] ${serif}`}>fx</span>
    </div>
  )
}

function StatusCell({ w, children }: { w: string; children?: ReactNode }) {
  return (
    <div className={`flex h-[17px] shrink-0 items-center justify-center border-r border-[#9c988f] ${w}`}>{children}</div>
  )
}

function StatusBar() {
  return (
    <div className={`flex h-[24px] items-center border-t border-[#808080] pl-[5px] text-[10.6px] text-[#222] ${ui}`}>
      <StatusCell w="w-[25px]">
        <Sv s={17}>
          <path d="M4 2h16v20H4z" stroke="#d8281e" strokeWidth="1.3" />
          <path d="M7 2h10v7H7zM8 15h8v7H8z" stroke="#d8281e" strokeWidth="1.2" />
        </Sv>
      </StatusCell>
      <StatusCell w="w-[96px]">
        <span className="w-full pl-[9px]">Лист 1 из 7</span>
      </StatusCell>
      <StatusCell w="w-[99px]" />
      <StatusCell w="w-[206px]">
        <span className="w-full pl-[8px]">PageStyle_Common</span>
      </StatusCell>
      <StatusCell w="w-[78px]">Русский</StatusCell>
      <StatusCell w="w-[68px]" />
      <StatusCell w="w-[45px]">
        <span className="h-[11px] w-[16px] border border-[#2f8fd0]" />
        <span className="ml-[5px] h-[14px] w-[5px] border-x-0 border-y border-[#444] bg-[linear-gradient(#444,#444)] bg-[length:1px_100%] bg-center bg-no-repeat" />
      </StatusCell>
      <StatusCell w="w-[29px]" />
      <span className="w-[600px] shrink-0 whitespace-nowrap pl-[22px]">
        Среднее значение: ; Количество: 0; Количество2: 0; Максимум: 0; Минимум: 0; Сумма: 0; Число выбранных: 1
      </span>
      <div className="flex h-[17px] w-[145px] shrink-0 items-center border-l border-r border-[#9c988f] px-[8px]">
        <span className="h-[2px] w-[11px] bg-[#333]" />
        <div className="relative mx-[5px] h-[2px] flex-1 bg-[#555]">
          <span className="absolute left-[40px] top-[-5px] h-[12px] w-[4px] border border-[#555] bg-[#d4d0c8]" />
          <span className="absolute left-[48px] top-[-2px] h-[6px] w-px bg-[#333]" />
        </div>
        <span className="relative h-[2px] w-[11px] bg-[#333]">
          <span className="absolute left-[4.5px] top-[-4.5px] h-[11px] w-[2px] bg-[#333]" />
        </span>
      </div>
      <span className="pl-[9px]">90 %</span>
    </div>
  )
}

const swatches = [
  'bg-[#1e8bcd]', 'bg-[#1e9e4a]', 'bg-[#1e8bcd]', 'bg-[#e53935]',
  'bg-[#e53935]', 'bg-[#f59a23]', 'bg-[#1e9e4a]', 'bg-[#f59a23]',
  'bg-[#1e9e4a]', 'bg-[#e53935]', 'bg-[#1e8bcd]', 'bg-[#e53935]',
  'bg-[#e53935]', 'bg-[#f59a23]', 'bg-[#1e9e4a]', 'bg-[#f59a23]',
]

function FloatingBar() {
  return (
    <div className={`absolute left-[1077px] top-[129px] z-10 h-[58px] w-[222px] border-[3px] border-[#aaa69e] bg-white ${ui}`}>
      <div className="flex h-[18px] items-center bg-[#aaa69e] pl-[2px] pr-[4px] text-[11px] font-bold text-black">
        <span className="flex-1">CO_Sales</span>
        <Caret />
        <span className="ml-[9px]">
          <Sv s={11}>
            <path d="M2 2l20 20M22 2L2 22" stroke="#222" strokeWidth="1.6" />
          </Sv>
        </span>
      </div>
      <div className="flex h-[34px] items-center pl-[12px]">
        <Sv>
          <path d="M4 2h10l5 5v15H4z" fill="#fff" stroke="#333" />
          <circle cx="17" cy="18" r="5.5" fill={blue} />
          <path d="M11.5 18h11M17 12.5v11" stroke="#fff" strokeWidth=".8" />
        </Sv>
        <span className="ml-[2px]">
          <Sv>
            <path d="M6 1h9l5 5v10H6z" fill="#ddd" stroke="#bbb" />
            <path d="M1 13h12v9H1z" fill="#ddd" stroke="#bbb" />
            <path d="M1 17h12M5 13v9M9 13v9" stroke="#bbb" />
            <path d="M15 15a4 4 0 017 3M22 20a4 4 0 01-7-1" stroke="#bbb" strokeWidth="1.6" />
          </Sv>
        </span>
        <span className="ml-[6px] mr-[8px] h-[16px] w-px bg-[#999]" />
        <Sv>
          <path d="M6 22V3c0-1 1-2 2-2h12v20c0 1-1 1-2 1z" fill="#fff" stroke="#333" />
          <path d="M19 1h3v4h-3z" fill="#cf8fdc" stroke="#8e3aa8" />
          <path d="M1 18h15v4H3z" fill="#cf8fdc" stroke="#8e3aa8" />
        </Sv>
        <span className="ml-[8px]">
          <Sv>
            <path d="M4 2h10l5 5v15H4z" fill="#fff" stroke="#333" />
            <circle cx="17" cy="18" r="5" fill="#e53935" />
            <path d="M15 16l4 4M19 16l-4 4" stroke="#fff" strokeWidth="1.3" />
          </Sv>
        </span>
        <span className="ml-[6px] mr-[8px] h-[16px] w-px bg-[#999]" />
        <div className="grid h-[20px] w-[20px] grid-cols-4 grid-rows-4">
          {swatches.map((c, i) => (
            <span key={i} className={c} />
          ))}
        </div>
        <span className="ml-[8px] mr-[7px] h-[16px] w-px bg-[#999]" />
        <Sv>
          <path d="M7 11V7a5 5 0 0110 0v4" stroke="#ee9b3a" strokeWidth="1.3" />
          <path d="M4 11h16v11H4z" fill="#fbd9a8" stroke="#ee9b3a" strokeWidth="1.3" />
          <path d="M12 14v4" stroke="#ee9b3a" strokeWidth="2" />
        </Sv>
      </div>
    </div>
  )
}

export default function App() {
  const rows = Array.from({ length: 33 }, (_, i) => i + 1)
  return (
    <div className="relative flex h-[794px] w-[1452px] flex-col overflow-hidden border-b-2 border-[#444] bg-[#d4d0c8] pl-[4px] pr-px pt-[4px]">
      <TitleBar />
      <div className="bg-gradient-to-b from-[#5c5c5c] to-[#777777]">
        <MenuBar />
        <Toolbar1 />
        <Toolbar2 />
      </div>
      <div className="flex h-[653px]">
        <div className="flex w-[1398px] shrink-0 flex-col">
          <FormulaBar />
          <div className="flex h-[582px] overflow-hidden">
            <div className="w-[1382px] shrink-0 overflow-hidden">
              <ColHeader />
              {rows.map((r) => (
                <SheetRow key={r} r={r} />
              ))}
            </div>
            <VScroll />
          </div>
          <HScroll />
          <TabBar />
        </div>
        <Sidebar />
      </div>
      <StatusBar />
      <FloatingBar />
      <div className="absolute left-[1402px] top-[403px] flex h-[72px] w-[7px] items-center justify-center bg-[#3a3a3a]">
        <span className="h-0 w-0 border-y-[3px] border-l-[3px] border-y-transparent border-l-[#ccc]" />
      </div>
    </div>
  )
}
